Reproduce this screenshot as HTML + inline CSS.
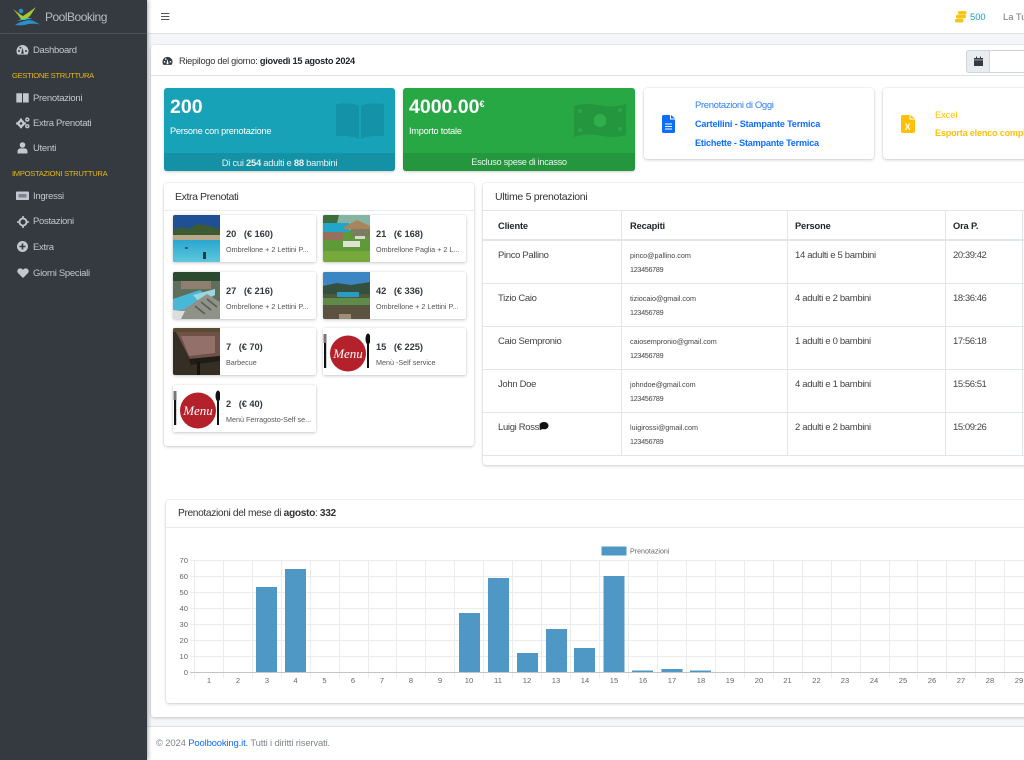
<!DOCTYPE html>
<html lang="it"><head><meta charset="utf-8"><title>PoolBooking</title>
<style>
*{box-sizing:border-box}
html,body{margin:0;padding:0;width:1024px;height:760px;overflow:hidden;background:#f4f6f9;font-family:"Liberation Sans",sans-serif;color:#212529}
.a{position:absolute;white-space:nowrap}
#root{position:relative;width:1024px;height:760px;overflow:hidden;filter:blur(.3px)}
.nav{color:#c2c7d0;font-size:9.5px;left:33px;letter-spacing:-.3px}
.sec{color:#e8b80f;font-size:7.6px;left:12px;letter-spacing:-.3px;margin-top:1px}
.ic{position:absolute;fill:#c2c7d0}
.card{position:absolute;background:#fff;border-radius:3px;box-shadow:0 0 1px rgba(0,0,0,.18),0 1px 3px rgba(0,0,0,.18)}
.item{position:absolute;width:143px;height:47px;background:#fff;border-radius:2px;box-shadow:0 0 1px rgba(0,0,0,.15),0 1px 3px rgba(0,0,0,.2);overflow:hidden}
.item svg{position:absolute;left:0;top:0}
.item b{position:absolute;left:53px;top:14px;font-size:9.3px;color:#343a40;white-space:pre;letter-spacing:-.05px}
.item span{position:absolute;left:53px;top:30px;font-size:7.2px;color:#555;white-space:nowrap}
.th{font-size:9.3px;font-weight:bold;top:221px;color:#212529;letter-spacing:-.15px}
.td{font-size:9.5px;color:#444;letter-spacing:-.33px}
.t{letter-spacing:-.45px}
.sm{font-size:7.2px;color:#444;margin-top:-1px}
.p{letter-spacing:-.3px}
.hl{position:absolute;left:483px;width:541px;height:1px;background:#e3e6e9}
.vl{position:absolute;width:1px;top:211px;height:245px;background:#e3e6e9}
svg text{font-family:"Liberation Sans",sans-serif}
</style></head><body><div id="root">

<!-- content -->
<div class="a" style="left:147px;top:0;width:877px;height:34px;background:#fff;border-bottom:1px solid #dee2e6"></div>
<div class="card" style="left:151px;top:45px;width:900px;height:672px"></div>
<div class="a" style="left:151px;top:75px;width:873px;height:1px;background:#dee2e6"></div>
<div class="a" style="left:147px;top:726px;width:877px;height:34px;background:#fff;border-top:1px solid #dee2e6"></div>

<!-- navbar -->
<svg class="a" style="left:161px;top:12px" width="9" height="9" viewBox="0 0 9 9"><path d="M0 1h8.400v1H0zM0 4h8.400v1H0zM0 7h8.400v1H0z" fill="#555"/></svg>
<svg class="a" style="left:955px;top:11px" width="12" height="12" viewBox="0 0 12 12"><rect x="3" y="0" width="8.500" height="3.500" rx="1.600" fill="#f5c518"/><rect x="1" y="3.800" width="10" height="3.600" rx="1.600" fill="#f5c518"/><rect x="0" y="7.700" width="8.500" height="3.800" rx="1.700" fill="#f5c518"/></svg>
<div class="a" style="left:970px;top:11px;font-size:9.4px;color:#17a2b8">500</div>
<div class="a" style="left:1003px;top:11px;font-size:9.4px;color:#777">La Tua</div>

<!-- sidebar -->
<div class="a" style="left:0;top:0;width:147px;height:760px;background:#343a40;box-shadow:1px 0 4px rgba(0,0,0,.35)"></div>
<div class="a" style="left:0;top:33px;width:147px;height:1px;background:#4b545c"></div>
<svg class="a" style="left:12px;top:5px" width="30" height="22" viewBox="0 0 30 22"><path d="M1 4l8 6 2 1 6-4 7-5-6 9-5 4H9.500L6 10z" fill="#a8c92e"/><circle cx="9" cy="6" r="2.300" fill="#2b8fc9"/><path d="M3 20c4-3 9-4 14-5 3 0 7 2 11 4.500-6-1-11-1-15 .5-4 .5-7 .500-10 0z" fill="#2b8fc9"/><path d="M5 16c4-2 7-3 11-3 2 0 3 .5 4 1-5 0-10 1-15 2z" fill="#3cc0dd"/></svg>
<div class="a" style="left:45px;top:10px;font-size:12px;color:#b5bbc3;letter-spacing:-.5px">PoolBooking</div>

<svg class="ic" style="left:16px;top:44px" width="13" height="12" viewBox="0 0 13 12"><path d="M6.500 1A6 6 0 0 0 .5 7c0 1.400.5 2.700 1.200 3.600h9.600c.7-.9 1.200-2.200 1.200-3.600a6 6 0 0 0-6-6zM3 8a1 1 0 1 1 0-2 1 1 0 0 1 0 2zm1.400-3.200a1 1 0 1 1 0-2 1 1 0 0 1 0 2zm3.400 5H5.200L6.300 4.500h.5zm2.200-1.800a1 1 0 1 1 0-2 1 1 0 0 1 0 2z"/></svg>
<div class="a nav" style="top:45px">Dashboard</div>
<div class="a sec" style="top:70px">GESTIONE STRUTTURA</div>
<svg class="ic" style="left:16px;top:92px" width="13" height="11" viewBox="0 0 13 11"><path d="M.3 1.200h5.700V10.500H.3zM12.700 1.200H7V10.500h5.700z"/></svg>
<div class="a nav" style="top:93px">Prenotazioni</div>
<svg class="ic" style="left:16px;top:117px" width="14" height="12" viewBox="0 0 14 12"><circle cx="5" cy="6.400" r="3.600"/><path d="M4 1.500h2l.3 2H3.700zM4 11.300h2l.3-2H3.700zM.1 5.400v2l2 .3V5.100zM9.900 5.400v2l-2 .3V5.100z"/><circle cx="5" cy="6.400" r="1.300" fill="#343a40"/><circle cx="11.300" cy="2.600" r="2.200"/><circle cx="11.300" cy="9.200" r="2.200"/><circle cx="11.300" cy="2.600" r=".7" fill="#343a40"/><circle cx="11.300" cy="9.200" r=".7" fill="#343a40"/></svg>
<div class="a nav" style="top:118px">Extra Prenotati</div>
<svg class="ic" style="left:17px;top:142px" width="11" height="12" viewBox="0 0 11 12"><circle cx="5.500" cy="3" r="2.800"/><path d="M.5 11.500V9.400C.5 7.500 2 6.400 3.500 6.400h4c1.500 0 3 1.100 3 3v2.100z"/></svg>
<div class="a nav" style="top:143px">Utenti</div>
<div class="a sec" style="top:168px">IMPOSTAZIONI STRUTTURA</div>
<svg class="ic" style="left:16px;top:191px" width="13" height="10" viewBox="0 0 13 10"><rect y="0.500" width="13" height="8.500" rx=".8"/><rect x="2.500" y="3" width="8" height="3.500" fill="#7d838a"/></svg>
<div class="a nav" style="top:191px">Ingressi</div>
<svg class="ic" style="left:17px;top:216px" width="12" height="12" viewBox="0 0 12 12"><path d="M5.200 0h1.600v1.600A4.600 4.600 0 0 1 10.400 5.200H12v1.600h-1.600A4.600 4.600 0 0 1 6.800 10.400V12H5.200v-1.600A4.600 4.600 0 0 1 1.600 6.800H0V5.200h1.600A4.600 4.600 0 0 1 5.200 1.600zM6 3.400a2.600 2.600 0 1 0 0 5.200 2.600 2.600 0 0 0 0-5.200z"/></svg>
<div class="a nav" style="top:216px">Postazioni</div>
<svg class="ic" style="left:17px;top:241px" width="11" height="11" viewBox="0 0 11 11"><path d="M5.500 0a5.500 5.500 0 1 0 0 11 5.500 5.500 0 0 0 0-11zM4.700 2.500h1.600v2.200h2.200v1.600H6.300v2.200H4.700V6.300H2.500V4.700h2.200z"/></svg>
<div class="a nav" style="top:242px">Extra</div>
<svg class="ic" style="left:17px;top:268px" width="12" height="10" viewBox="0 0 13 11"><path d="M6.500 11L1 5.500C-.5 3.800.2.800 3 .4 4.500.2 5.700 1 6.500 2 7.300 1 8.500.2 10 .4c2.800.4 3.500 3.400 2 5.100z"/></svg>
<div class="a nav" style="top:268px">Giorni Speciali</div>

<!-- header -->
<svg class="a" style="left:162px;top:56px" width="11" height="10" viewBox="0 0 13 12"><path fill="#343a40" d="M6.500 1A6 6 0 0 0 .5 7c0 1.400.5 2.700 1.200 3.600h9.600c.7-.9 1.200-2.200 1.200-3.600a6 6 0 0 0-6-6zM3 8a1 1 0 1 1 0-2 1 1 0 0 1 0 2zm1.400-3.200a1 1 0 1 1 0-2 1 1 0 0 1 0 2zm3.400 5H5.200L6.300 4.500h.5zm2.200-1.800a1 1 0 1 1 0-2 1 1 0 0 1 0 2z"/></svg>
<div class="a" style="left:179px;top:56px;font-size:9.2px;letter-spacing:-.25px;color:#333">Riepilogo del giorno: <b style="color:#212529">giovedì 15 agosto 2024</b></div>
<div class="a" style="left:966px;top:50px;width:70px;height:23px;border:1px solid #ced4da;border-radius:3px;background:#fff"></div>
<div class="a" style="left:966px;top:50px;width:24px;height:23px;background:#e9ecef;border:1px solid #ced4da;border-radius:3px 0 0 3px"></div>
<svg class="a" style="left:974px;top:56px" width="9" height="10" viewBox="0 0 9 10"><path fill="#343a40" d="M0 2h9v1.600H0zM0 4.200h9V10H0zM2 .5h1v2H2zM6 .5h1v2H6z"/></svg>

<!-- stat boxes -->
<div class="a" style="left:164px;top:88px;width:231px;height:83px;background:#17a2b8;border-radius:3px;box-shadow:0 1px 2px rgba(0,0,0,.2);overflow:hidden">
 <div class="a" style="left:0;top:65px;width:231px;height:18px;background:#1591a5"></div>
 <svg class="a" style="left:172px;top:15px" width="48" height="36" viewBox="0 0 48 36"><path fill="#1492a6" d="M0 1C8 0 18 0 23 3v33C18 33 8 32.500 0 33zM48 1C40 0 30 0 25 3v33c5-3 15-3.500 23-3z"/></svg>
</div>
<div class="a" style="left:170px;top:96px;font-size:19.500px;font-weight:bold;color:#fff">200</div>
<div class="a" style="left:170px;top:126px;font-size:9.200px;letter-spacing:-.25px;color:#fff">Persone con prenotazione</div>
<div class="a" style="left:164px;top:157px;width:231px;text-align:center;font-size:9.400px;letter-spacing:-.25px;color:#e6f4f6">Di cui <b>254</b> adulti e <b>88</b> bambini</div>

<div class="a" style="left:403px;top:88px;width:232px;height:83px;background:#28a745;border-radius:3px;box-shadow:0 1px 2px rgba(0,0,0,.2);overflow:hidden">
 <div class="a" style="left:0;top:65px;width:232px;height:18px;background:#24963e"></div>
 <svg class="a" style="left:171px;top:15px" width="52" height="35" viewBox="0 0 52 35"><path fill="#24963e" d="M0 3C9 0 18 1 26 2.500S43 4 52 1v31c-9 3-18 2-26 .5S9 31 0 34z"/><circle cx="26" cy="17.500" r="6.500" fill="#2fae4d"/><circle cx="6" cy="8" r="2.200" fill="#2aa648"/><circle cx="46" cy="7" r="2.200" fill="#2aa648"/><circle cx="6" cy="27" r="2.200" fill="#2aa648"/><circle cx="46" cy="26" r="2.200" fill="#2aa648"/></svg>
</div>
<div class="a" style="left:409px;top:96px;font-size:19.500px;font-weight:bold;color:#fff">4000.00<sup style="font-size:9px;line-height:0;vertical-align:6px">€</sup></div>
<div class="a" style="left:409px;top:126px;font-size:9.200px;letter-spacing:-.25px;color:#fff">Importo totale</div>
<div class="a" style="left:403px;top:157px;width:232px;text-align:center;font-size:9.200px;letter-spacing:-.3px;color:#e6f6ea">Escluso spese di incasso</div>

<div class="card" style="left:644px;top:88px;width:230px;height:71px"></div>
<svg class="a" style="left:662px;top:115px" width="13" height="18" viewBox="0 0 13 18"><path fill="#0d6efd" d="M0 1.500C0 .7.600 0 1.400 0H8v4.500h5v12c0 .8-.600 1.500-1.400 1.500H1.400C.6 18 0 17.300 0 16.500zM9 0l4 3.500H9zM3 8.500v1h7v-1zm0 2.500v1h7v-1zm0 2.500v1h7v-1z"/></svg>
<div class="a" style="left:695px;top:100px;font-size:9.500px;letter-spacing:-.35px;color:#2f7ff0">Prenotazioni di Oggi</div>
<div class="a" style="left:695px;top:119px;font-size:9.100px;letter-spacing:-.17px;font-weight:bold;color:#0d6efd">Cartellini - Stampante Termica</div>
<div class="a" style="left:695px;top:138px;font-size:9.100px;letter-spacing:-.2px;font-weight:bold;color:#0d6efd">Etichette - Stampante Termica</div>

<div class="card" style="left:883px;top:88px;width:160px;height:71px"></div>
<svg class="a" style="left:901px;top:115px" width="14" height="18" viewBox="0 0 14 18"><path fill="#ffc107" d="M0 1.500C0 .7.600 0 1.400 0H8.500v4.500H14v12c0 .8-.600 1.500-1.400 1.500H1.400C.6 18 0 17.300 0 16.500zM9.500 0L14 3.500H9.500z"/><text x="3.600" y="15" font-size="9" font-weight="bold" fill="#fff">X</text></svg>
<div class="a" style="left:935px;top:110px;font-size:9.500px;letter-spacing:-.2px;color:#ffc107">Excel</div>
<div class="a" style="left:935px;top:128px;font-size:9.100px;letter-spacing:-.2px;font-weight:bold;color:#ffc107">Esporta elenco completo</div>

<!-- Extra Prenotati -->
<div class="card" style="left:164px;top:183px;width:310px;height:263px"></div>
<div class="a" style="left:164px;top:210px;width:310px;height:1px;background:#e9ecef"></div>
<div class="a" style="left:175px;top:191px;font-size:10.500px;letter-spacing:-.4px;color:#333">Extra Prenotati</div>

<div class="item" style="left:173px;top:215px"><svg width="47" height="47" viewBox="0 0 47 47"><defs><linearGradient id="g1" x1="0" y1="0" x2="0" y2="1"><stop offset="0" stop-color="#2aa7cf"/><stop offset="1" stop-color="#5cc7dc"/></linearGradient></defs><rect width="47" height="47" fill="#1f4f95"/><path d="M0 15l8-3 8 2 8-5 8 1 15 4v8H0z" fill="#3d5a32"/><rect y="20" width="47" height="5" fill="#b7a98a"/><rect y="25" width="47" height="22" fill="url(#g1)"/><rect x="30" y="37" width="3" height="7" fill="#334"/><rect x="12" y="32" width="3" height="2" fill="#457"/></svg><b>20   (€ 160)</b><span>Ombrellone + 2 Lettini P...</span></div>
<div class="item" style="left:323px;top:215px"><svg width="47" height="47" viewBox="0 0 47 47"><rect width="47" height="47" fill="#5f9a3a"/><rect width="47" height="15" fill="#86b4a4"/><path d="M0 0h16l-2 8H0z" fill="#3c6e3c"/><rect y="8" width="26" height="9" fill="#21a6c9"/><path d="M21 12L34 5l13 6v3H21z" fill="#a8855a"/><rect x="28" y="14" width="19" height="8" fill="#7c7c60"/><rect y="17" width="20" height="8" fill="#96705a"/><rect x="20" y="26" width="17" height="6" fill="#dde2d5"/><rect x="32" y="21" width="10" height="3" fill="#d5dbcc"/><rect y="36" width="47" height="11" fill="#77a83c"/></svg><b>21   (€ 168)</b><span>Ombrellone Paglia + 2 L...</span></div>
<div class="item" style="left:173px;top:272px"><svg width="47" height="47" viewBox="0 0 47 47"><rect width="47" height="47" fill="#5f6f5c"/><rect width="47" height="9" fill="#2b4a30"/><rect x="8" y="9" width="30" height="8" fill="#8e7f70"/><path d="M0 27L27 18l6 5-22 15H0z" fill="#48b8d8"/><path d="M20 23l22-6v6L27 31z" fill="#9ed6e0"/><path d="M10 38l24-16 13 8v17H4z" fill="#8f9288"/><path d="M0 38l12 1-4 8H0z" fill="#ddd"/><path d="M22 34l10 8M28 30l10 8M34 27l10 8" stroke="#5a5a50" stroke-width="1.500"/></svg><b>27   (€ 216)</b><span>Ombrellone + 2 Lettini P...</span></div>
<div class="item" style="left:323px;top:272px"><svg width="47" height="47" viewBox="0 0 47 47"><rect width="47" height="47" fill="#4d5a3c"/><rect width="47" height="14" fill="#3d86c4"/><path d="M0 14l14-3 14 2 19-3v12H0z" fill="#34503f"/><rect x="14" y="20" width="22" height="5" fill="#2a9cc4"/><rect y="26" width="47" height="7" fill="#5f8a4a"/><rect y="34" width="47" height="13" fill="#5c5240"/><rect x="16" y="42" width="12" height="5" fill="#9c8f78"/></svg><b>42   (€ 336)</b><span>Ombrellone + 2 Lettini P...</span></div>
<div class="item" style="left:173px;top:328px"><svg width="47" height="47" viewBox="0 0 47 47"><rect width="47" height="47" fill="#352e24"/><path d="M3 4h44v24l-30 3z" fill="#6f5148"/><path d="M8 8h34v17l-26 3z" fill="#94706a"/><rect width="47" height="4" fill="#5a4a30"/><path d="M16 31l31-3v5L18 37z" fill="#1f1b15"/><rect x="24" y="34" width="3" height="13" fill="#151210"/></svg><b>7   (€ 70)</b><span>Barbecue</span></div>
<div class="item" style="left:323px;top:328px"><svg width="47" height="47" viewBox="0 0 47 47"><rect width="47" height="47" fill="#fff"/><rect x="1" y="6" width="2.200" height="34" fill="#111"/><rect x=".5" y="6" width="3" height="9" fill="#777"/><circle cx="25" cy="25.500" r="18" fill="#b4212a"/><text x="25" y="30" text-anchor="middle" font-size="13" font-style="italic" fill="#fff" style="font-family:'Liberation Serif',serif">Menu</text><ellipse cx="45" cy="11" rx="2.500" ry="5.500" fill="#111"/><rect x="44" y="15" width="2" height="25" fill="#111"/></svg><b>15   (€ 225)</b><span>Menù -Self service</span></div>
<div class="item" style="left:173px;top:385px"><svg width="47" height="47" viewBox="0 0 47 47"><rect width="47" height="47" fill="#fff"/><rect x="1" y="6" width="2.200" height="34" fill="#111"/><rect x=".5" y="6" width="3" height="9" fill="#777"/><circle cx="25" cy="25.500" r="18" fill="#b4212a"/><text x="25" y="30" text-anchor="middle" font-size="13" font-style="italic" fill="#fff" style="font-family:'Liberation Serif',serif">Menu</text><ellipse cx="45" cy="11" rx="2.500" ry="5.500" fill="#111"/><rect x="44" y="15" width="2" height="25" fill="#111"/></svg><b>2   (€ 40)</b><span>Menù Ferragosto-Self se...</span></div>

<!-- Table -->
<div class="card" style="left:483px;top:183px;width:600px;height:282px"></div>
<div class="a" style="left:495px;top:191px;font-size:10.500px;letter-spacing:-.3px;color:#333">Ultime 5 prenotazioni</div>
<div class="hl" style="top:210px"></div>
<div class="hl" style="top:239px;height:2px"></div>
<div class="hl" style="top:283px"></div><div class="hl" style="top:326px"></div><div class="hl" style="top:369px"></div><div class="hl" style="top:412px"></div><div class="hl" style="top:455px"></div>
<div class="vl" style="left:621px"></div><div class="vl" style="left:787px"></div><div class="vl" style="left:945px"></div><div class="vl" style="left:1022px"></div>
<div class="a th" style="left:498px">Cliente</div><div class="a th" style="left:630px">Recapiti</div><div class="a th" style="left:795px">Persone</div><div class="a th" style="left:953px">Ora P.</div>

<div class="a td" style="left:498px;top:250px">Pinco Pallino</div><div class="a sm" style="left:630px;top:252px">pinco@pallino.com</div><div class="a sm p" style="left:630px;top:266px">123456789</div><div class="a td" style="left:795px;top:250px">14 adulti e 5 bambini</div><div class="a td t" style="left:953px;top:250px">20:39:42</div>
<div class="a td" style="left:498px;top:293px">Tizio Caio</div><div class="a sm" style="left:630px;top:295px">tiziocaio@gmail.com</div><div class="a sm p" style="left:630px;top:309px">123456789</div><div class="a td" style="left:795px;top:293px">4 adulti e 2 bambini</div><div class="a td t" style="left:953px;top:293px">18:36:46</div>
<div class="a td" style="left:498px;top:336px">Caio Sempronio</div><div class="a sm" style="left:630px;top:338px">caiosempronio@gmail.com</div><div class="a sm p" style="left:630px;top:352px">123456789</div><div class="a td" style="left:795px;top:336px">1 adulti e 0 bambini</div><div class="a td t" style="left:953px;top:336px">17:56:18</div>
<div class="a td" style="left:498px;top:379px">John Doe</div><div class="a sm" style="left:630px;top:381px">johndoe@gmail.com</div><div class="a sm p" style="left:630px;top:395px">123456789</div><div class="a td" style="left:795px;top:379px">4 adulti e 1 bambini</div><div class="a td t" style="left:953px;top:379px">15:56:51</div>
<div class="a td" style="left:498px;top:422px">Luigi Rossi</div><svg class="a" style="left:539px;top:422px" width="10" height="9" viewBox="0 0 10 9"><path fill="#111" d="M5 0C2.300 0 .5 1.600.5 3.700c0 1 .4 1.800 1 2.400L.8 8.200 3.500 7c.5.2 1 .3 1.500.3 2.700 0 4.500-1.600 4.500-3.600S7.700 0 5 0z"/></svg><div class="a sm" style="left:630px;top:424px">luigirossi@gmail.com</div><div class="a sm p" style="left:630px;top:438px">123456789</div><div class="a td" style="left:795px;top:422px">2 adulti e 2 bambini</div><div class="a td t" style="left:953px;top:422px">15:09:26</div>

<!-- Chart -->
<div class="card" style="left:166px;top:500px;width:900px;height:203px"></div>
<div class="a" style="left:166px;top:527px;width:858px;height:1px;background:#e9ecef"></div>
<div class="a" style="left:178px;top:508px;font-size:10.200px;letter-spacing:-.35px;color:#333">Prenotazioni del mese di <b>agosto</b>: <b>332</b></div>
<svg class="a" style="left:166px;top:540px" width="858" height="150" viewBox="166 540 858 150">
<g stroke="#ececec" stroke-width="1" shape-rendering="crispEdges">
<path d="M190 560.500H1024M190 576.500H1024M190 592.500H1024M190 608.500H1024M190 624.500H1024M190 640.500H1024M190 656.500H1024"/>
<path d="M194.500 560V678M223.500 560V678M252.500 560V678M281.500 560V678M310.500 560V678M339.500 560V678M368.500 560V678M396.500 560V678M425.500 560V678M454.500 560V678M483.500 560V678M512.500 560V678M541.500 560V678M570.500 560V678M599.500 560V678M628.500 560V678M657.500 560V678M686.500 560V678M715.500 560V678M744.500 560V678M773.500 560V678M802.500 560V678M831.500 560V678M860.500 560V678M889.500 560V678M917.500 560V678M946.500 560V678M975.500 560V678M1004.500 560V678"/>
</g>
<path d="M190 672.500H1024" stroke="#c4c4c4" stroke-width="1" shape-rendering="crispEdges"/>
<g fill="#4f97c4">
<rect x="256" y="587" width="21" height="85"/><rect x="285" y="569" width="21" height="103"/><rect x="459" y="613" width="21" height="59"/><rect x="488" y="578" width="21" height="94"/><rect x="517" y="653" width="21" height="19"/><rect x="546" y="629" width="21" height="43"/><rect x="574" y="648" width="21" height="24"/><rect x="603.500" y="576" width="21" height="96"/><rect x="632" y="670.500" width="21" height="1.500"/><rect x="661.500" y="669" width="21" height="3"/><rect x="690" y="670.500" width="21" height="1.500"/>
<rect x="601.500" y="546.500" width="25" height="9"/>
</g>
<text x="630" y="553.500" font-size="7.100" fill="#666">Prenotazioni</text>
<g font-size="7.600" fill="#666" text-anchor="end">
<text x="188" y="563">70</text><text x="188" y="579">60</text><text x="188" y="595">50</text><text x="188" y="611">40</text><text x="188" y="627">30</text><text x="188" y="643">20</text><text x="188" y="659">10</text><text x="188" y="675">0</text></g>
<g font-size="7.600" fill="#666" text-anchor="middle">
<text x="209" y="683">1</text><text x="238" y="683">2</text><text x="267" y="683">3</text><text x="295.500" y="683">4</text><text x="324.500" y="683">5</text><text x="353" y="683">6</text><text x="382" y="683">7</text><text x="411" y="683">8</text><text x="440" y="683">9</text><text x="469" y="683">10</text><text x="498" y="683">11</text><text x="527" y="683">12</text><text x="556" y="683">13</text><text x="585" y="683">14</text><text x="614" y="683">15</text><text x="643" y="683">16</text><text x="672" y="683">17</text><text x="701" y="683">18</text><text x="730" y="683">19</text><text x="759" y="683">20</text><text x="787.500" y="683">21</text><text x="816.500" y="683">22</text><text x="845" y="683">23</text><text x="874" y="683">24</text><text x="903" y="683">25</text><text x="932" y="683">26</text><text x="961" y="683">27</text><text x="990" y="683">28</text><text x="1019" y="683">29</text></g>
</svg>

<!-- footer -->
<div class="a" style="left:156px;top:738px;font-size:9.500px;letter-spacing:-.17px;color:#80868c">© 2024 <span style="color:#0d6efd">Poolbooking.it.</span> Tutti i diritti riservati.</div>
</div></body></html>
